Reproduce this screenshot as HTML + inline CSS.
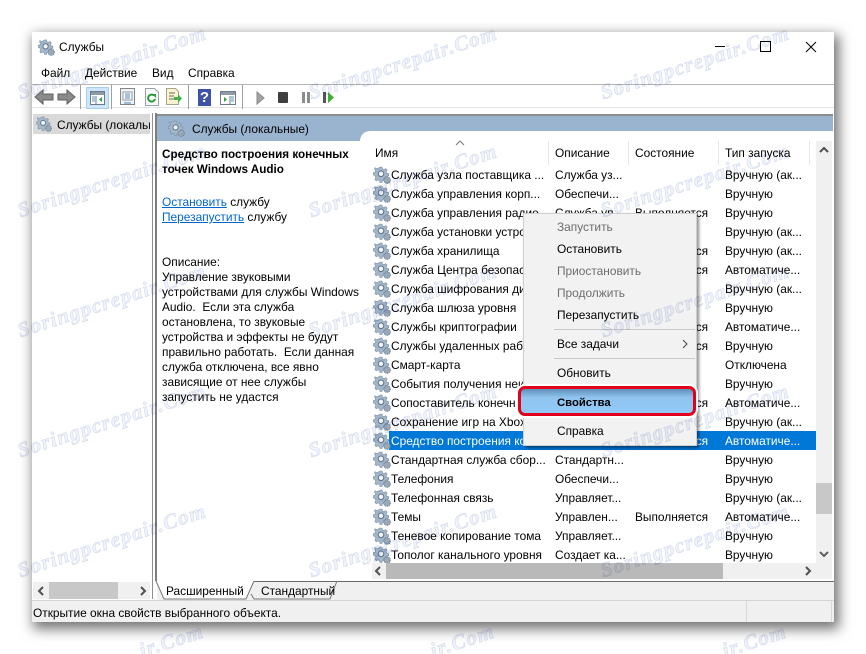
<!DOCTYPE html>
<html><head><meta charset="utf-8"><style>
html,body{margin:0;padding:0;width:866px;height:654px;background:#fff;overflow:hidden}
#p{position:absolute;left:0;top:0;width:866px;height:654px;overflow:hidden;font:11.9px/16px "Liberation Sans","Noto Sans CJK SC",sans-serif;color:#000}
#p div,#p span,#p svg{position:absolute;white-space:nowrap}
.r{left:372px;width:444px;height:19px}
.r svg{left:1px;top:1px}
.r span{top:2px}
.a{left:19px}.b{left:183px}.c{left:263px}.d{left:353px}
.m{left:33px;color:#000}.g{color:#6d6d6d}
.wm{left:0;top:0;z-index:50;mix-blend-mode:multiply;pointer-events:none}
.wm text{font:italic bold 21px "Liberation Serif",serif;letter-spacing:1.200px;fill:#f1f3fb;stroke:#cdd5ec;stroke-width:.5px;text-anchor:middle}
.wm text.e{text-anchor:end}
.sep{width:1px;height:24px;top:85px;background:#a0a0a0}
a{color:#0066cc;text-decoration:underline}
</style></head><body><div id="p">
<svg width="0" height="0" style="left:0;top:0"><defs>
<symbol id="gear" viewBox="0 0 18 18"><path d="M7 1h2l.5 2 1.500.6 1.700-1 1.400 1.400-1 1.700.6 1.500 2 .5v2l-2 .5-.6 1.500 1 1.700-1.400 1.400-1.700-1-1.500.6-.5 2H7l-.5-2-1.500-.6-1.700 1-1.400-1.400 1-1.700L1.800 9.300l-1.800-.5v-2l2-.5.600-1.500-1-1.700L2 1.700l1.700 1 1.500-.6z" fill="#a3b7cb" stroke="#7a8da2" stroke-width=".6"/><circle cx="8" cy="7.800" r="2.800" fill="#eef3f8" stroke="#5d7085"/><circle cx="14" cy="14" r="3.300" fill="#9aa9b8" stroke="#6c7d8f" stroke-dasharray="1.200 .7"/></symbol>
</defs></svg>

<!-- window -->
<div style="left:32px;top:32px;width:802px;height:590px;background:#fff;box-shadow:3px 5px 12px 2px rgba(0,0,0,.55)"></div>
<svg style="left:38px;top:39px" width="17" height="17"><use href="#gear"/></svg>
<div style="left:59px;top:39px">Службы</div>
<div style="left:715px;top:46px;width:10px;height:1px;background:#000"></div>
<div style="left:760px;top:41px;width:9px;height:9px;border:1px solid #000"></div>
<svg style="left:805px;top:41px" width="12" height="12"><path d="M1 1l10 10M11 1L1 11" stroke="#000" fill="none"/></svg>

<div style="left:41px;top:65px">Файл</div><div style="left:85px;top:65px">Действие</div><div style="left:152px;top:65px">Вид</div><div style="left:188px;top:65px">Справка</div>
<div style="left:32px;top:84px;width:802px;height:1px;background:#b5b5b5"></div>
<div style="left:32px;top:107px;width:802px;height:6px;background:#fff;border-top:1px solid #e3e3e3"></div>

<!-- toolbar -->
<svg style="left:34px;top:88px" width="42" height="18"><path d="M1 9l8-7v4h10v6H9v4z" fill="#8b8b8b" stroke="#5f5f5f"/><path d="M41 9l-8-7v4H24v6h9v4z" fill="#8b8b8b" stroke="#5f5f5f"/></svg>
<div class="sep" style="left:80px"></div>
<div style="left:86px;top:87px;width:21px;height:20px;background:#cde6f9;border:1px solid #a4cfef"></div>
<svg style="left:90px;top:91px" width="16" height="15"><rect x=".5" y=".5" width="14" height="13" fill="#fff" stroke="#6d7b88"/><rect x="1" y="1" width="13" height="3" fill="#8d9aa7"/><path d="M6 5v8" stroke="#6d7b88"/><path d="M12 6v5l-3-2.500z" fill="#2e9e3e"/><path d="M2 6h3M2 8h3M2 10h3" stroke="#5d8fb8"/></svg>
<div class="sep" style="left:111px"></div>
<svg style="left:120px;top:88px" width="16" height="18"><rect x=".5" y=".5" width="14" height="16" fill="#f2f2f2" stroke="#7d8790"/><rect x="3" y="4" width="9" height="8" fill="#fff" stroke="#8d98a3"/><path d="M5 6h5M5 8h5M5 10h5" stroke="#4c86b8"/><path d="M4 15h7" stroke="#3a8fd0"/></svg>
<svg style="left:145px;top:88px" width="14" height="18"><path d="M.5.5h9l4 4v13H.5z" fill="#fafafa" stroke="#98a0a8"/><path d="M10 11a3.500 3.500 0 1 1-1-3.500" fill="none" stroke="#2d9a3b" stroke-width="2"/><path d="M7 6h4v4z" fill="#2d9a3b"/></svg>
<svg style="left:166px;top:88px" width="17" height="18"><path d="M.5.500h9l3 3v13H.5z" fill="#f9f4cf" stroke="#a8a48a"/><path d="M3 5h6M3 8h5M3 11h5" stroke="#666"/><path d="M8 9h4V6l4 4.500L12 15v-3H8z" fill="#44b04c"/></svg>
<div class="sep" style="left:188px"></div>
<div style="left:198px;top:89px;width:13px;height:17px;background:#3f51a8;color:#fff;font:bold 15px/17px 'Liberation Sans',sans-serif;text-align:center">?</div>
<svg style="left:220px;top:91px" width="16" height="15"><rect x=".5" y=".5" width="15" height="13" fill="#fff" stroke="#6d7b88"/><rect x="1" y="1" width="14" height="3" fill="#8d9aa7"/><path d="M10 5v8" stroke="#6d7b88"/><path d="M4 6v5l3-2.500z" fill="#2e9e3e"/><path d="M11 6h3M11 8h3M11 10h3" stroke="#5d8fb8"/></svg>
<div class="sep" style="left:242px"></div>
<svg style="left:256px;top:91px" width="80" height="14"><path d="M1 1l7 6-7 6z" fill="#a3a3a3" stroke="#8a8a8a"/><rect x="22" y="1" width="10" height="11" rx="1" fill="#3f3f3f"/><rect x="46" y="1" width="3" height="11" fill="#8c8c8c"/><rect x="51" y="1" width="3" height="11" fill="#8c8c8c"/><rect x="67" y="1" width="3" height="11" fill="#555"/><path d="M72 1l6 5.500L72 12z" fill="#3cb034"/></svg>

<!-- left pane -->
<div style="left:33px;top:113px;width:119px;height:486px;border-right:1px solid #8f8f8f;background:#fff"></div>
<div style="left:33px;top:114px;width:117px;height:20px;background:#d9d9d9"></div>
<svg style="left:36px;top:116px" width="16" height="16"><use href="#gear"/></svg>
<div style="left:33px;top:117px;width:117px;height:18px;overflow:hidden"><span style="left:24px;top:0">Службы (локальные)</span></div>
<div style="left:33px;top:582px;width:117px;height:17px;background:#f0f0f0"></div>
<div style="left:49px;top:582px;width:69px;height:17px;background:#c8c8c8"></div>
<svg style="left:36px;top:586px" width="10" height="10"><path d="M7 1L3 5l4 4" fill="none" stroke="#505050" stroke-width="2"/></svg>
<svg style="left:138px;top:586px" width="10" height="10"><path d="M3 1l4 4-4 4" fill="none" stroke="#505050" stroke-width="2"/></svg>

<!-- right pane -->
<div style="left:155px;top:113px;width:2px;height:468px;background:#7d7d7d"></div>
<div style="left:157px;top:114px;width:676px;height:2px;background:#8c8c8c"></div>
<div style="left:157px;top:116px;width:676px;height:25px;background:#9ab3cf"></div>
<div style="left:157px;top:141px;width:676px;height:440px;background:#fff"></div>
<div style="left:360px;top:131px;width:473px;height:12px;background:#fff;border-top-left-radius:10px"></div>
<svg style="left:168px;top:120px" width="17" height="17"><use href="#gear"/></svg>
<div style="left:192px;top:121px">Службы (локальные)</div>

<!-- description -->
<div style="left:162px;top:147px;line-height:15px;font-weight:bold;font-size:11.700px">Средство построения конечных<br>точек Windows Audio</div>
<div style="left:162px;top:195px;line-height:15px"><a>Остановить</a> службу<br><a>Перезапустить</a> службу</div>
<div style="left:162px;top:255px;line-height:15px">Описание:<br>Управление звуковыми<br>устройствами для службы Windows<br>Audio.&nbsp; Если эта служба<br>остановлена, то звуковые<br>устройства и эффекты не будут<br>правильно работать.&nbsp; Если данная<br>служба отключена, все явно<br>зависящие от нее службы<br>запустить не удастся</div>

<!-- header -->
<div style="left:375px;top:145px">Имя</div><div style="left:555px;top:145px">Описание</div><div style="left:635px;top:145px">Состояние</div><div style="left:725px;top:145px">Тип запуска</div>
<div style="left:548px;top:141px;width:1px;height:24px;background:#e5e5e5"></div><div style="left:628px;top:141px;width:1px;height:24px;background:#e5e5e5"></div><div style="left:718px;top:141px;width:1px;height:24px;background:#e5e5e5"></div><div style="left:809px;top:141px;width:1px;height:24px;background:#e5e5e5"></div>
<svg style="left:455px;top:140px" width="10" height="6"><path d="M1 5l4-4 4 4" fill="none" stroke="#7a7a7a"/></svg>

<!-- rows -->
<div class="r" style="top:165px"><svg width="18" height="18"><use href="#gear"/></svg><span class="a">Служба узла поставщика ...</span><span class="b">Служба уз...</span><span class="d">Вручную (ак...</span></div>
<div class="r" style="top:184px"><svg width="18" height="18"><use href="#gear"/></svg><span class="a">Служба управления корп...</span><span class="b">Обеспечи...</span><span class="d">Вручную</span></div>
<div class="r" style="top:203px"><svg width="18" height="18"><use href="#gear"/></svg><span class="a">Служба управления радио</span><span class="b">Служба уп...</span><span class="c">Выполняется</span><span class="d">Вручную</span></div>
<div class="r" style="top:222px"><svg width="18" height="18"><use href="#gear"/></svg><span class="a">Служба установки устро...</span><span class="d">Вручную (ак...</span></div>
<div class="r" style="top:241px"><svg width="18" height="18"><use href="#gear"/></svg><span class="a">Служба хранилища</span><span class="c">Выполняется</span><span class="d">Вручную (ак...</span></div>
<div class="r" style="top:260px"><svg width="18" height="18"><use href="#gear"/></svg><span class="a">Служба Центра безопасности</span><span class="c">Выполняется</span><span class="d">Автоматиче...</span></div>
<div class="r" style="top:279px"><svg width="18" height="18"><use href="#gear"/></svg><span class="a">Служба шифрования дисков</span><span class="d">Вручную (ак...</span></div>
<div class="r" style="top:298px"><svg width="18" height="18"><use href="#gear"/></svg><span class="a">Служба шлюза уровня</span><span class="d">Вручную</span></div>
<div class="r" style="top:317px"><svg width="18" height="18"><use href="#gear"/></svg><span class="a">Службы криптографии</span><span class="c">Выполняется</span><span class="d">Автоматиче...</span></div>
<div class="r" style="top:336px"><svg width="18" height="18"><use href="#gear"/></svg><span class="a">Службы удаленных рабочих</span><span class="c">Выполняется</span><span class="d">Вручную</span></div>
<div class="r" style="top:355px"><svg width="18" height="18"><use href="#gear"/></svg><span class="a">Смарт-карта</span><span class="d">Отключена</span></div>
<div class="r" style="top:374px"><svg width="18" height="18"><use href="#gear"/></svg><span class="a">События получения неисправ</span><span class="d">Вручную</span></div>
<div class="r" style="top:393px"><svg width="18" height="18"><use href="#gear"/></svg><span class="a">Сопоставитель конечных</span><span class="c">Выполняется</span><span class="d">Автоматиче...</span></div>
<div class="r" style="top:412px"><svg width="18" height="18"><use href="#gear"/></svg><span class="a">Сохранение игр на Xbox</span><span class="d">Вручную (ак...</span></div>
<div style="left:389px;top:431px;width:427px;height:19px;background:#0078d7"></div>
<div class="r" style="top:431px;color:#fff"><svg width="18" height="18"><use href="#gear"/></svg><span class="a">Средство построения конечных</span><span class="c">Выполняется</span><span class="d">Автоматиче...</span></div>
<div class="r" style="top:450px"><svg width="18" height="18"><use href="#gear"/></svg><span class="a">Стандартная служба сбор...</span><span class="b">Стандартн...</span><span class="d">Вручную</span></div>
<div class="r" style="top:469px"><svg width="18" height="18"><use href="#gear"/></svg><span class="a">Телефония</span><span class="b">Обеспечи...</span><span class="d">Вручную</span></div>
<div class="r" style="top:488px"><svg width="18" height="18"><use href="#gear"/></svg><span class="a">Телефонная связь</span><span class="b">Управляет...</span><span class="d">Вручную (ак...</span></div>
<div class="r" style="top:507px"><svg width="18" height="18"><use href="#gear"/></svg><span class="a">Темы</span><span class="b">Управлен...</span><span class="c">Выполняется</span><span class="d">Автоматиче...</span></div>
<div class="r" style="top:526px"><svg width="18" height="18"><use href="#gear"/></svg><span class="a">Теневое копирование тома</span><span class="b">Управляет...</span><span class="d">Вручную</span></div>
<div class="r" style="top:545px"><svg width="18" height="18"><use href="#gear"/></svg><span class="a">Тополог канального уровня</span><span class="b">Создает ка...</span><span class="d">Вручную</span></div>

<!-- scrollbars -->
<div style="left:816px;top:141px;width:16px;height:422px;background:#f0f0f0"></div>
<div style="left:816px;top:483px;width:16px;height:31px;background:#c8c8c8"></div>
<svg style="left:819px;top:146px" width="10" height="8"><path d="M1 6l4-4 4 4" fill="none" stroke="#505050" stroke-width="2"/></svg>
<svg style="left:819px;top:550px" width="10" height="8"><path d="M1 2l4 4 4-4" fill="none" stroke="#606060" stroke-width="2"/></svg>
<div style="left:372px;top:563px;width:460px;height:16px;background:#f0f0f0"></div>
<div style="left:386px;top:563px;width:337px;height:16px;background:#b9b9b9"></div>
<svg style="left:373px;top:566px" width="10" height="10"><path d="M7 1L3 5l4 4" fill="none" stroke="#505050" stroke-width="2"/></svg>
<svg style="left:803px;top:566px" width="10" height="10"><path d="M3 1l4 4-4 4" fill="none" stroke="#505050" stroke-width="2"/></svg>

<!-- tabs -->
<div style="left:157px;top:581px;width:677px;height:19px;background:#f0f0f0"></div>
<div style="left:252px;top:581px;width:582px;height:1px;background:#6a6a6a"></div>
<svg style="left:155px;top:580px" width="190" height="21"><path d="M1 1l8 18h82l8-18" fill="#fff" stroke="#777"/><path d="M96 14l3 5h76l7-18" fill="none" stroke="#777"/></svg>
<div style="left:166px;top:583px">Расширенный</div>
<div style="left:261px;top:583px">Стандартный</div>

<!-- status -->
<div style="left:32px;top:600px;width:802px;height:22px;background:#f0f0f0;border-top:1px solid #d4d4d4;box-sizing:border-box"></div>
<div style="left:33px;top:605px">Открытие окна свойств выбранного объекта.</div>
<div style="left:746px;top:601px;width:1px;height:21px;background:#d8d8d8"></div>
<div style="left:831px;top:601px;width:1px;height:21px;background:#d8d8d8"></div>

<!-- context menu -->
<div style="left:523px;top:213px;width:174px;height:233px;background:#f2f2f2;border:1px solid #cfcfcf;box-sizing:border-box;box-shadow:2px 2px 3px rgba(0,0,0,.45)">
<span class="m g" style="top:5px">Запустить</span>
<span class="m" style="top:27px">Остановить</span>
<span class="m g" style="top:49px">Приостановить</span>
<span class="m g" style="top:71px">Продолжить</span>
<span class="m" style="top:93px">Перезапустить</span>
<div style="left:30px;top:115px;width:141px;height:1px;background:#c8c8c8"></div>
<span class="m" style="top:122px">Все задачи</span>
<svg style="left:157px;top:125px" width="8" height="10"><path d="M2 1l4 4-4 4" fill="none" stroke="#444"/></svg>
<div style="left:30px;top:144px;width:141px;height:1px;background:#c8c8c8"></div>
<span class="m" style="top:151px">Обновить</span>
<span class="m" style="top:209px">Справка</span>
</div>
<div style="left:516px;top:384px;width:182px;height:34px;border-radius:9px;background:#fff"></div>
<div style="left:518px;top:386px;width:178px;height:30px;box-sizing:border-box;border:3px solid #e2001a;border-radius:7px;background:linear-gradient(#5d8fb8 0,#8fc4ee 35%,#92c9f7 100%)"></div>
<div style="left:557px;top:395px;font-weight:bold;font-size:11.300px">Свойства</div>

<!-- watermarks -->
<svg class="wm" width="866" height="654" viewBox="0 0 866 654">
<text transform="translate(114 69) rotate(-18)">Soringpcrepair.Com</text>
<text transform="translate(405 69) rotate(-18)">Soringpcrepair.Com</text>
<text transform="translate(697 69) rotate(-18)">Soringpcrepair.Com</text>
<text transform="translate(114 187) rotate(-18)">Soringpcrepair.Com</text>
<text transform="translate(405 187) rotate(-18)">Soringpcrepair.Com</text>
<text transform="translate(697 187) rotate(-18)">Soringpcrepair.Com</text>
<text transform="translate(114 307) rotate(-18)">Soringpcrepair.Com</text>
<text transform="translate(405 307) rotate(-18)">Soringpcrepair.Com</text>
<text transform="translate(697 307) rotate(-18)">Soringpcrepair.Com</text>
<text transform="translate(114 427) rotate(-18)">Soringpcrepair.Com</text>
<text transform="translate(405 427) rotate(-18)">Soringpcrepair.Com</text>
<text transform="translate(697 427) rotate(-18)">Soringpcrepair.Com</text>
<text transform="translate(114 547) rotate(-18)">Soringpcrepair.Com</text>
<text transform="translate(405 547) rotate(-18)">Soringpcrepair.Com</text>
<text transform="translate(697 547) rotate(-18)">Soringpcrepair.Com</text>
<text class="e" transform="translate(205 637) rotate(-18)">ir.Com</text>
<text class="e" transform="translate(496 637) rotate(-18)">ir.Com</text>
<text class="e" transform="translate(788 637) rotate(-18)">ir.Com</text>
</svg>
</div></body></html>
